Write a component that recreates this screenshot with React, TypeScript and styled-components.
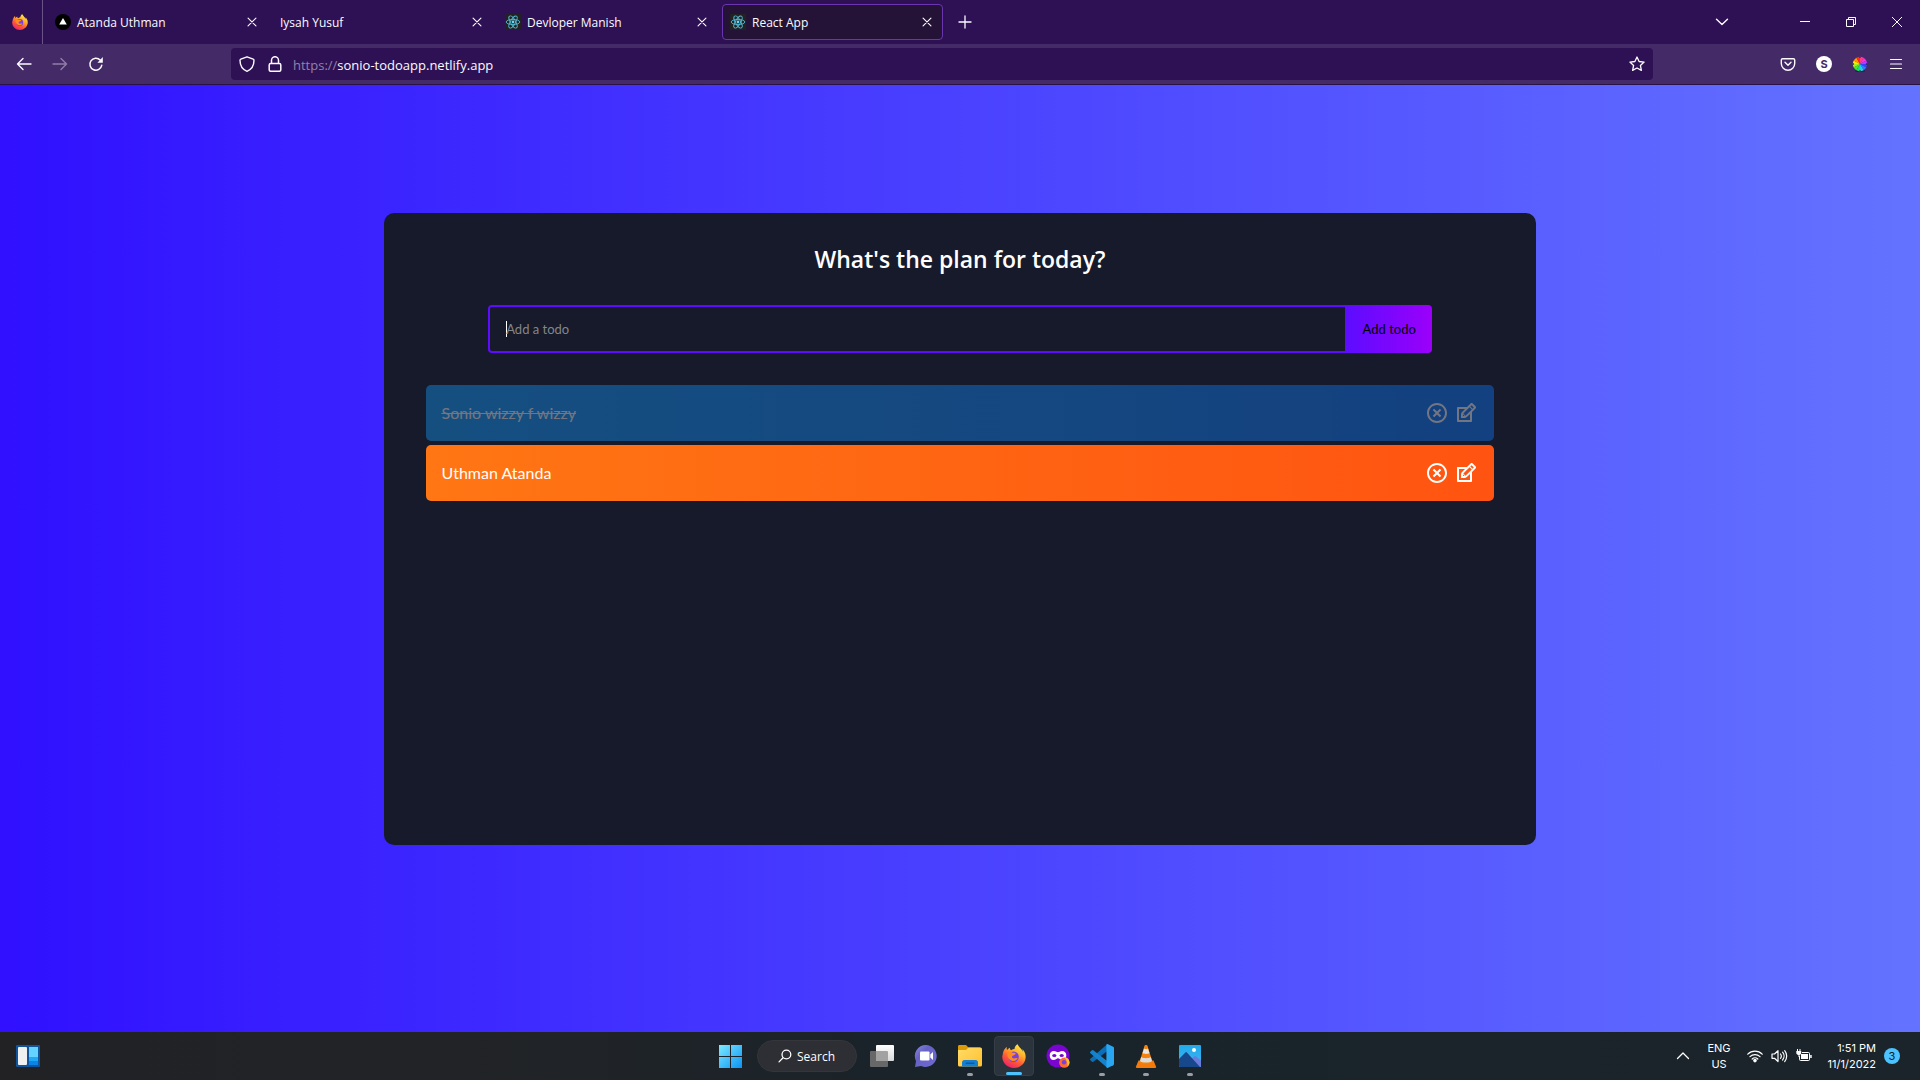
import React, { useState } from "react";
import styled, { createGlobalStyle, css } from "styled-components";
import { RiCloseCircleLine } from "react-icons/ri";
import { TiEdit } from "react-icons/ti";

const uiFont = `"Open Sans", "Noto Sans", sans-serif`;
const pageFont = `Lato, "Open Sans", sans-serif`;
const shellFont = `Inter, "Open Sans", sans-serif`;

const GlobalStyle = createGlobalStyle`
  body {
    margin: 0;
    font-family: ${uiFont};
  }
  button {
    font-family: inherit;
    color: inherit;
    border: 0;
    padding: 0;
    background: none;
    cursor: pointer;
  }
  svg {
    display: block;
  }
`;

const Screen = styled.div`
  min-height: 100vh;
  display: flex;
  flex-direction: column;
`;

/* ---------- browser chrome ---------- */

const TabStrip = styled.header`
  display: flex;
  align-items: center;
  height: 44px;
  background: #2e1155;
  color: #fbfbfe;
`;

const HomeTab = styled.button`
  box-sizing: border-box;
  width: 43px;
  height: 44px;
  padding-left: 12px;
  border-right: 1px solid #6a5387;
`;

const Tabs = styled.nav`
  display: flex;
  gap: 4px;
  margin-left: 4px;
`;

const Tab = styled.div<{ $active?: boolean }>`
  box-sizing: border-box;
  display: flex;
  align-items: center;
  gap: 6px;
  width: 221px;
  height: 36px;
  padding: 0 7px;
  border: 1px solid transparent;
  border-radius: 4px;
  ${(p) =>
    p.$active &&
    css`
      background: #251337;
      border-color: #6b35b0;
    `}
`;

const TabTitle = styled.button`
  flex: 1;
  padding-top: 2px;
  text-align: left;
  font-size: 12px;
  line-height: 20px;
`;

const TabClose = styled.button`
  display: grid;
  place-items: center;
  width: 16px;
  height: 24px;
`;

const NewTab = styled.button`
  display: grid;
  place-items: center;
  width: 32px;
  height: 32px;
  margin-left: 6px;
`;

const WindowButtons = styled.div`
  display: flex;
  margin-left: auto;
`;

const WindowButton = styled.button<{ $gap?: boolean }>`
  display: grid;
  place-items: center;
  width: 46px;
  height: 44px;
  margin-right: ${(p) => (p.$gap ? "37px" : "0")};
`;

const Toolbar = styled.div`
  box-sizing: border-box;
  display: flex;
  align-items: center;
  height: 41px;
  padding: 0 6px;
  background: #452a68;
  border-bottom: 1px solid #2a1246;
  color: #fbfbfe;
`;

const ToolButton = styled.button<{ $dim?: boolean }>`
  display: grid;
  place-items: center;
  width: 36px;
  height: 32px;
  opacity: ${(p) => (p.$dim ? 0.4 : 1)};
`;

const AddressBar = styled.div`
  box-sizing: border-box;
  flex: 1;
  display: flex;
  align-items: center;
  height: 32px;
  margin: 0 117px;
  padding: 0 8px;
  border-radius: 4px;
  background: #2e1155;
`;

const AddressIcon = styled.button`
  display: grid;
  place-items: center;
  width: 16px;
  height: 24px;
  margin-right: 12px;
  &:nth-of-type(2) {
    margin-right: 10px;
  }
  &:last-child {
    margin-right: 0;
  }
`;

const Scheme = styled.label`
  padding-top: 2px;
  font-size: 13px;
  line-height: 20px;
  color: #9282a8;
`;

const Address = styled.input`
  flex: 1;
  padding: 2px 0 0;
  border: 0;
  outline: 0;
  background: none;
  font-family: ${uiFont};
  font-size: 13px;
  line-height: 20px;
  color: #fbfbfe;
`;

const Extensions = styled.div`
  display: flex;
`;

/* ---------- todo page ---------- */

const Page = styled.main`
  flex: 1;
  display: flow-root;
  background: linear-gradient(90deg, #3010ff 0%, #6473ff 100%);
`;

const Card = styled.section`
  display: flow-root;
  width: 60%;
  min-height: 600px;
  margin: 128px auto;
  padding-bottom: 32px;
  border-radius: 10px;
  background: #161a2b;
  color: #fff;
  font-family: ${pageFont};
`;

const Heading = styled.h1`
  margin: 32px 0;
  font-family: ${uiFont};
  font-size: 23px;
  line-height: 28px;
  font-weight: 600;
  text-align: center;
`;

const TodoForm = styled.form`
  display: flex;
  justify-content: center;
  margin-bottom: 32px;
`;

const TodoInput = styled.input`
  width: 70%;
  height: 16px;
  padding: 14px 32px 14px 16px;
  border: 2px solid #5d0cff;
  border-radius: 4px 0 0 4px;
  outline: 0;
  background: transparent;
  caret-color: transparent;
  color: #fff;
  font-family: ${pageFont};
  font-size: 13px;
  &::placeholder {
    color: #848689;
    opacity: 1;
  }
  &:placeholder-shown {
    background: linear-gradient(#fff, #fff) no-repeat 16px center / 1px 16px;
  }
`;

const AddButton = styled.button`
  padding: 16px;
  border-radius: 0 4px 4px 0;
  background: linear-gradient(90deg, #5d0cff 0%, #9b00fa 100%);
  color: #000;
  font-size: 13px;
  line-height: 16px;
`;

const TodoList = styled.ul`
  margin: 0;
  padding: 0;
  list-style: none;
`;

const TodoRow = styled.li<{ $done?: boolean }>`
  display: flex;
  justify-content: space-between;
  align-items: center;
  width: 90%;
  margin: 4px auto;
  padding: 16px;
  border-radius: 5px;
  background: ${(p) =>
    p.$done
      ? "linear-gradient(90deg, #149fff 0%, #117aff 100%)"
      : "linear-gradient(90deg, #ff7614 0%, #ff5411 100%)"};
  opacity: ${(p) => (p.$done ? 0.4 : 1)};
  text-decoration: ${(p) => (p.$done ? "line-through" : "none")};
`;

const TodoText = styled.button`
  font-size: 16px;
  line-height: 24px;
  text-decoration: inherit;
`;

const RowIcons = styled.div`
  display: flex;
  gap: 5px;
`;

/* ---------- taskbar ---------- */

const Taskbar = styled.footer`
  display: grid;
  grid-template-columns: 1fr auto 1fr;
  align-items: center;
  height: 48px;
  background: linear-gradient(90deg, #222225 0%, #202327 30%, #19232b 50%, #1b242a 100%);
  color: #fff;
  font-family: ${shellFont};
`;

const Widgets = styled.button`
  justify-self: start;
  margin-left: 16px;
`;

const Apps = styled.div`
  display: flex;
  align-items: center;
  gap: 4px;
`;

const AppButton = styled.button<{ $active?: boolean; $state?: "open" | "focus" }>`
  box-sizing: border-box;
  position: relative;
  display: grid;
  place-items: center;
  width: 40px;
  height: 40px;
  border-radius: 4px;
  ${(p) =>
    p.$state === "focus" &&
    css`
      background: #2b343c;
      border: 1px solid #363e46;
    `}
  ${(p) =>
    p.$state &&
    css`
      &::after {
        content: "";
        position: absolute;
        left: 50%;
        bottom: 0;
        width: ${p.$state === "focus" ? "16px" : "6px"};
        height: 3px;
        border-radius: 2px;
        transform: translateX(-50%);
        background: ${p.$state === "focus" ? "#4cc2ff" : "#9a9da1"};
      }
    `}
`;

const SearchButton = styled.button`
  box-sizing: border-box;
  display: flex;
  align-items: center;
  justify-content: center;
  gap: 5px;
  width: 100px;
  height: 32px;
  margin: 0 1px 0 2px;
  border: 1px solid #34363c;
  border-radius: 16px;
  background: #2d2f35;
  font-family: ${uiFont};
  font-size: 12px;
`;

const Tray = styled.div`
  justify-self: end;
  display: flex;
  align-items: center;
  padding-right: 20px;
`;

const TrayButton = styled.button`
  display: flex;
  align-items: center;
  gap: 8px;
  margin-right: 16px;
  font-size: 11px;
  line-height: 16px;
`;

const Clock = styled.time`
  margin-right: 8px;
  font-size: 11px;
  line-height: 16px;
  text-align: right;
`;

const Badge = styled.span`
  width: 16px;
  height: 16px;
  border-radius: 8px;
  background: #4cc2ff;
  color: #10202c;
  font-size: 11px;
  line-height: 16px;
  text-align: center;
`;

/* ---------- drawings ---------- */

type StrokeProps = { d: string; size?: number; w?: number; box?: number };

const Stroke = ({ d, size = 16, w = 1.3, box = 16 }: StrokeProps) => (
  <svg
    width={size}
    height={size}
    viewBox={`0 0 ${box} ${box}`}
    fill="none"
    stroke="currentColor"
    strokeWidth={w}
    strokeLinecap="round"
    strokeLinejoin="round"
    aria-hidden="true"
  >
    <path d={d} />
  </svg>
);

const Firefox = ({ size = 16, id }: { size?: number; id: string }) => (
  <svg width={size} height={size} viewBox="0 0 24 24" aria-hidden="true">
    <defs>
      <linearGradient id={id} x1="0.8" y1="0" x2="0.25" y2="1">
        <stop offset="0" stopColor="#fff44f" />
        <stop offset="0.35" stopColor="#ffb02a" />
        <stop offset="0.65" stopColor="#ff5a36" />
        <stop offset="1" stopColor="#e91e70" />
      </linearGradient>
    </defs>
    <path
      fill={`url(#${id})`}
      d="M22.6 8.2c-.5-1.2-1.5-2.6-2.4-3 .6 1.200 1 2.300 1.100 3.100-1.300-3.100-3.600-4.400-5.400-7.300-.4-.600-.4-.9-.3-1-2.300 1.300-3 3.700-3.100 5-1.200.1-2.300.5-3.300 1.200-1-.400-1.300-1.600-1.300-2.500-1.200.5-2.100 1.400-2.800 2.200-.5-.6-.5-2.500-.4-2.900C3.500 3.600 1 6.800.8 10.200c-.3.800-.5 2-.5 2.600C.300 19 5.400 24 12 24c5.800 0 10.600-4.100 11.500-9.600.4-2.300 0-4.600-.9-6.200z"
    />
    <circle cx="11.600" cy="12.800" r="5.200" fill="#7542e5" />
    <path
      fill="#ff8a1e"
      d="M5.500 8.500c2-1.300 4-.9 5.100.3 1.700-.2 2.900.2 3.100.9-.4 1.300-2 1.500-3 2-.8.500-1 1.600-.200 2.300 1.400 1.200 3.200-.400 5.100.300-1 2.400-3.900 3.300-6.300 2.100-3.500-1.600-4.600-4.900-3.800-7.900z"
    />
  </svg>
);

const ReactLogo = () => (
  <svg width="16" height="16" viewBox="0 0 16 16" aria-hidden="true">
    <rect width="16" height="16" fill="#222" />
    <g fill="none" stroke="#55b9d3" strokeWidth="0.9">
      <ellipse cx="8" cy="8" rx="6.800" ry="2.600" />
      <ellipse cx="8" cy="8" rx="6.800" ry="2.600" transform="rotate(60 8 8)" />
      <ellipse cx="8" cy="8" rx="6.800" ry="2.600" transform="rotate(120 8 8)" />
    </g>
    <circle cx="8" cy="8" r="1.400" fill="#61dafb" />
  </svg>
);

const VercelLogo = () => (
  <svg width="16" height="16" viewBox="0 0 16 16" aria-hidden="true">
    <circle cx="8" cy="8" r="8" fill="#000" />
    <path d="M8 4l3.800 6.600H4.200z" fill="#fff" />
  </svg>
);

const Reload = () => (
  <svg width="16" height="16" viewBox="0 0 16 16" aria-hidden="true">
    <path
      d="M13.800 9.200A6 6 0 1 1 12.200 4"
      fill="none"
      stroke="currentColor"
      strokeWidth="1.500"
      strokeLinecap="round"
    />
    <path d="M14.800 1v5.200a.5.5 0 0 1-.5.5H9.400z" fill="currentColor" />
  </svg>
);

const Pocket = () => (
  <Stroke
    w={1.4}
    d="M2.700 2.700h10.600c.8 0 1.400.6 1.400 1.400v3.400a6.700 6.700 0 0 1-13.400 0V4.100c0-.8.600-1.400 1.400-1.400z M5 6.300l3 3 3-3"
  />
);

const Account = () => (
  <svg width="16" height="16" viewBox="0 0 16 16" aria-hidden="true">
    <circle cx="8" cy="8" r="8" fill="#fff" />
    <text
      x="8"
      y="12"
      textAnchor="middle"
      fontFamily="Inter, sans-serif"
      fontSize="11"
      fontWeight="700"
      fill="#452a68"
    >
      S
    </text>
  </svg>
);

const wheelColors = [
  "#ff3b8a", "#ff2fe0", "#b13bff", "#3d3bff", "#2f7dff", "#16d5e8",
  "#16e07a", "#38f02a", "#a8f01a", "#ffe600", "#ff9c00", "#ff2a1a",
];

const ColorWheel = () => (
  <svg width="16" height="16" viewBox="-8 -8 16 16" aria-hidden="true">
    <ellipse cy="7" rx="5" ry="1" fill="#2a1a40" />
    {wheelColors.map((c, i) => (
      <path key={c} d="M0 0L0 -7.200A7.200 7.200 0 0 1 3.600 -6.235z" fill={c} transform={`rotate(${i * 30})`} />
    ))}
    <g fill="#222">
      <circle cy="-6.600" r="0.700" />
      <circle cy="6.600" r="0.700" />
      <circle cx="-6.600" r="0.700" />
      <circle cx="6.600" r="0.700" />
    </g>
  </svg>
);

const Restore = () => (
  <svg width="10" height="10" viewBox="0 0 10 10" fill="none" stroke="currentColor" aria-hidden="true">
    <path d="M.5 2.500h7v7h-7z M2.500 2.500v-2h7v7h-2" />
  </svg>
);

const WidgetsIcon = () => (
  <svg width="24" height="22" viewBox="0 0 24 22" aria-hidden="true">
    <rect width="24" height="22" rx="1" fill="#0f549c" />
    <rect x="2" y="2" width="9" height="18" rx="1" fill="#f1f1f1" />
    <rect x="13" y="2" width="9" height="10" fill="#63d3ff" />
    <rect x="13" y="12" width="9" height="4" fill="#22a7f5" />
    <rect x="13" y="16" width="9" height="4" fill="#0a85e6" />
  </svg>
);

const StartIcon = () => (
  <svg width="23" height="23" viewBox="0 0 23 23" aria-hidden="true">
    <defs>
      <linearGradient id="start" x1="0" y1="0" x2="1" y2="1">
        <stop offset="0" stopColor="#7eeaff" />
        <stop offset="1" stopColor="#0a93f5" />
      </linearGradient>
    </defs>
    <path d="M0 0h11v11H0zM12 0h11v11H12zM0 12h11v11H0zM12 12h11v11H12z" fill="url(#start)" />
  </svg>
);

const SearchIcon = () => (
  <Stroke size={14} w={1.5} d="M14.600 6.300a5 5 0 1 1-10 0 5 5 0 0 1 10 0zM5.800 10L1.200 14.700" />
);

const TaskViewIcon = () => (
  <svg width="24" height="22" viewBox="0 0 24 22" aria-hidden="true">
    <defs>
      <linearGradient id="tv" x1="0" y1="0" x2="0" y2="1">
        <stop offset="0" stopColor="#fff" />
        <stop offset="1" stopColor="#d8d8d8" />
      </linearGradient>
    </defs>
    <rect x="6" width="18" height="16" rx="1" fill="url(#tv)" />
    <path d="M0 7a1 1 0 0 1 1-1h5v10h12v5a1 1 0 0 1-1 1H1a1 1 0 0 1-1-1z" fill="#686868" />
    <path d="M6 6h11a1 1 0 0 1 1 1v9H6z" fill="#a2a2a2" />
  </svg>
);

const ChatIcon = () => (
  <svg width="24" height="24" viewBox="0 0 24 24" aria-hidden="true">
    <defs>
      <linearGradient id="chat" x1="0" y1="0" x2="1" y2="1">
        <stop offset="0" stopColor="#8c8ce0" />
        <stop offset="0.35" stopColor="#6763c4" />
        <stop offset="1" stopColor="#6f68d6" />
      </linearGradient>
    </defs>
    <path d="M12 1a11 11 0 1 1-4.900 21L1 23l1-6A11 11 0 0 1 12 1z" fill="url(#chat)" />
    <rect x="6" y="7.500" width="9.500" height="9" rx="1" fill="#fff" />
    <path d="M16.300 10.500L19 8v8l-2.700-2.500z" fill="#fff" />
  </svg>
);

const FolderIcon = () => (
  <svg width="24" height="22" viewBox="0 0 24 22" aria-hidden="true">
    <defs>
      <linearGradient id="folder" x1="0" y1="0" x2="1" y2="1">
        <stop offset="0" stopColor="#ffdc69" />
        <stop offset="1" stopColor="#ffc02e" />
      </linearGradient>
    </defs>
    <path d="M0 1.500C0 .7.600 0 1.400 0H8l2.500 2.500H22V8H0z" fill="#dc9a08" />
    <path d="M0 5h8l2.500-2.500h12A1.500 1.500 0 0 1 24 4v16a1.500 1.500 0 0 1-1.500 1.500h-21A1.500 1.500 0 0 1 0 20z" fill="url(#folder)" />
    <path d="M4 21.500v-4a2.500 2.500 0 0 1 2.500-2.500h11a2.500 2.500 0 0 1 2.500 2.500v4z" fill="#147fd0" />
    <rect x="7.500" y="17.500" width="9" height="1.500" rx="0.700" fill="#0a5a9e" />
  </svg>
);

const PrivateFirefox = () => (
  <svg width="24" height="24" viewBox="0 0 24 24" aria-hidden="true">
    <circle cx="12" cy="12" r="11.500" fill="#7a05d0" />
    <path
      d="M8 7c1.800 0 3 1.300 4 1.300S14.200 7 16 7c2.600 0 4.300 2 4.300 4.200 0 2.700-1.500 4.800-3.700 4.800-2.200 0-3.300-1.800-4.600-1.800S9.600 16 7.400 16c-2.200 0-3.700-2.100-3.700-4.800C3.700 9 5.400 7 8 7z"
      fill="#fff"
    />
    <ellipse cx="8.300" cy="11.600" rx="2.100" ry="1.500" fill="#7a05d0" />
    <ellipse cx="15.700" cy="11.600" rx="2.100" ry="1.500" fill="#7a05d0" />
    <circle cx="18.300" cy="18.600" r="5.200" fill="#ff6a2d" />
    <path d="M18.500 13c3.500.700 5 3 5 5.600 0 1.500-.800 3-2 4 .3-4-1-6.600-3-9.600z" fill="#ffc22e" />
    <circle cx="18" cy="18.300" r="2.200" fill="#7542e5" />
  </svg>
);

const CodeIcon = () => (
  <svg width="24" height="24" viewBox="0 0 24 24" aria-hidden="true">
    <path d="M17.500 0v6.700L3.300 17.700a1 1 0 0 1-1.300 0L.400 16.300a1 1 0 0 1 0-1.500z" fill="#0a6fb8" />
    <path d="M17.500 24v-6.700L3.300 6.300a1 1 0 0 0-1.300 0L.400 7.700a1 1 0 0 0 0 1.500z" fill="#1583cc" />
    <path d="M17.500 0l5.700 2.700a1.500 1.500 0 0 1 .8 1.300v16a1.500 1.500 0 0 1-.8 1.300L17.500 24c-.6.100-1.100-.3-1.100-.9V.900c0-.6.500-1 1.100-.9z" fill="#29a6f2" />
  </svg>
);

const ConeIcon = () => (
  <svg width="22" height="23" viewBox="0 0 22 23" aria-hidden="true">
    <path d="M3.500 15.500h15L21 21.500a1 1 0 0 1-1 1.500H2a1 1 0 0 1-1-1.500z" fill="#f47b0a" />
    <path d="M9.500.800c.2-1 2.800-1 3 0L17.500 17c-1.500 2.600-11.500 2.600-13 0z" fill="#f5820d" />
    <path d="M9.100 3.500L7.600 8c1.600 1.200 5.200 1.200 6.800 0l-1.500-4.500c-1 .8-2.800.8-3.800 0z" fill="#e7e7e7" />
    <path d="M6.200 12l-1.200 4c1.900 2.100 10.100 2.100 12 0l-1.200-4c-2.200 1.600-7.400 1.600-9.600 0z" fill="#dcdcdc" />
  </svg>
);

const PhotosIcon = () => (
  <svg width="22" height="22" viewBox="0 0 22 22" aria-hidden="true">
    <defs>
      <linearGradient id="photo" x1="0" y1="0" x2="0" y2="1">
        <stop offset="0" stopColor="#22a9ea" />
        <stop offset="1" stopColor="#3fb6f2" />
      </linearGradient>
    </defs>
    <rect width="22" height="22" rx="1" fill="url(#photo)" />
    <path d="M11 15l4.500-3.800a1 1 0 0 1 1.300 0L22 15.500V21a1 1 0 0 1-1 1h-7z" fill="#6a7bdc" />
    <path d="M0 14l6.400-6.500a1 1 0 0 1 1.500 0L21 22H1a1 1 0 0 1-1-1z" fill="#17488c" />
    <circle cx="15" cy="5" r="2" fill="#fff" />
  </svg>
);

const WifiIcon = () => (
  <svg width="16" height="16" viewBox="0 0 16 16" fill="none" stroke="currentColor" strokeWidth="1.200" strokeLinecap="round" aria-hidden="true">
    <path d="M.8 6.200a10 10 0 0 1 14.400 0M3 8.700a7 7 0 0 1 10 0M5.200 11a4 4 0 0 1 5.600 0" />
    <circle cx="8" cy="12.600" r="1.200" fill="currentColor" />
  </svg>
);

const VolumeIcon = () => (
  <svg width="17" height="16" viewBox="0 0 17 16" fill="none" stroke="currentColor" strokeWidth="1.200" strokeLinecap="round" strokeLinejoin="round" aria-hidden="true">
    <path d="M1 6v4.300h2.500L7 13.500V2.700L3.500 6zM9.500 6a3.500 3.500 0 0 1 0 4.300M11.600 4.200a6 6 0 0 1 0 7.800M13.700 2.600a8.600 8.600 0 0 1 0 11" />
  </svg>
);

const BatteryIcon = () => (
  <svg width="16" height="16" viewBox="0 0 16 16" aria-hidden="true">
    <path d="M6 4.500h6.500a1 1 0 0 1 1 1v6a1 1 0 0 1-1 1h-8a1 1 0 0 1-1-1V8" fill="none" stroke="currentColor" />
    <rect x="5" y="6" width="7" height="5" fill="currentColor" />
    <path d="M14.200 7h1.500v3h-1.500zM1 1h1v2h1.500V1h1v2h.7v2c0 1.200-.8 1.800-1.700 2v2h-1V7C1.200 6.800.3 6.200.3 5V3H1z" fill="currentColor" />
  </svg>
);

const closeMark = "M3.500 3.500l9 9M12.500 3.500l-9 9";

/* ---------- app ---------- */

const tabs = [
  { title: "Atanda Uthman", icon: <VercelLogo /> },
  { title: "Iysah Yusuf" },
  { title: "Devloper Manish", icon: <ReactLogo /> },
  { title: "React App", icon: <ReactLogo />, active: true },
];

const initialTodos = [
  { id: 1, text: "Sonio wizzy f wizzy", done: true },
  { id: 2, text: "Uthman Atanda", done: false },
];

const Browser = () => (
  <>
    <TabStrip>
      <HomeTab aria-label="Firefox View">
        <Firefox id="ff-home" />
      </HomeTab>
      <Tabs aria-label="Tabs">
        {tabs.map((t) => (
          <Tab key={t.title} $active={t.active}>
            {t.icon}
            <TabTitle>{t.title}</TabTitle>
            <TabClose aria-label={`Close ${t.title}`}>
              <Stroke size={14} w={1.3} d={closeMark} />
            </TabClose>
          </Tab>
        ))}
      </Tabs>
      <NewTab aria-label="New tab">
        <Stroke w={1.3} d="M8 2v12M2 8h12" />
      </NewTab>
      <WindowButtons>
        <WindowButton $gap aria-label="List all tabs">
          <Stroke w={1.4} d="M2.500 5.200L8 10.600l5.500-5.400" />
        </WindowButton>
        <WindowButton aria-label="Minimize">
          <Stroke size={10} box={10} w={1} d="M0 4.500h10" />
        </WindowButton>
        <WindowButton aria-label="Restore">
          <Restore />
        </WindowButton>
        <WindowButton aria-label="Close window">
          <Stroke size={10} box={10} w={1} d="M0 0l10 10M10 0L0 10" />
        </WindowButton>
      </WindowButtons>
    </TabStrip>
    <Toolbar>
      <ToolButton aria-label="Back">
        <Stroke w={1.4} d="M15 8H1.500M7 2.500L1.500 8 7 13.500" />
      </ToolButton>
      <ToolButton $dim aria-label="Forward">
        <Stroke w={1.4} d="M1 8h13.500M9 2.500L14.500 8 9 13.500" />
      </ToolButton>
      <ToolButton aria-label="Reload">
        <Reload />
      </ToolButton>
      <AddressBar>
        <AddressIcon aria-label="Tracking protection">
          <Stroke w={1.4} d="M8 .8l6.200 2.400c.5.200.8.600.8 1.100 0 5.200-2 9-7 11-5-2-7-5.800-7-11 0-.5.300-.9.800-1.100z" />
        </AddressIcon>
        <AddressIcon aria-label="Site information">
          <Stroke w={1.5} d="M3.700 7.500h8.600c.8 0 1.500.7 1.500 1.500v4.800c0 .8-.7 1.500-1.500 1.500H3.700c-.8 0-1.500-.7-1.500-1.500V9c0-.8.700-1.500 1.500-1.500zM4.500 7.300V4.200a3.500 3.500 0 0 1 7 0v3.100" />
        </AddressIcon>
        <Scheme htmlFor="address">https://</Scheme>
        <Address id="address" defaultValue="sonio-todoapp.netlify.app" />
        <AddressIcon aria-label="Bookmark this page">
          <Stroke w={1.3} d="M8 1l2.100 4.500 5 .6-3.700 3.400 1 4.900L8 12l-4.400 2.400 1-4.900L.900 6.100l5-.6z" />
        </AddressIcon>
      </AddressBar>
      <Extensions>
        <ToolButton aria-label="Save to Pocket">
          <Pocket />
        </ToolButton>
        <ToolButton aria-label="Account">
          <Account />
        </ToolButton>
        <ToolButton aria-label="Color picker">
          <ColorWheel />
        </ToolButton>
        <ToolButton aria-label="Menu">
          <Stroke w={1.2} d="M2.500 3.500h11M2.500 8h11M2.500 12.500h11" />
        </ToolButton>
      </Extensions>
    </Toolbar>
  </>
);

const TodoApp = () => {
  const [todos, setTodos] = useState(initialTodos);
  const [text, setText] = useState("");

  const add = (e: React.FormEvent) => {
    e.preventDefault();
    if (!text.trim()) return;
    setTodos([{ id: Date.now(), text, done: false }, ...todos]);
    setText("");
  };

  return (
    <Page>
      <Card>
        <Heading>What's the plan for today?</Heading>
        <TodoForm onSubmit={add}>
          <TodoInput
            aria-label="Add a todo"
            placeholder="Add a todo"
            value={text}
            onChange={(e) => setText(e.target.value)}
          />
          <AddButton type="submit">Add todo</AddButton>
        </TodoForm>
        <TodoList>
          {todos.map((t) => (
            <TodoRow key={t.id} $done={t.done}>
              <TodoText
                onClick={() =>
                  setTodos(todos.map((o) => (o.id === t.id ? { ...o, done: !o.done } : o)))
                }
              >
                {t.text}
              </TodoText>
              <RowIcons>
                <button
                  aria-label={`Remove ${t.text}`}
                  onClick={() => setTodos(todos.filter((o) => o.id !== t.id))}
                >
                  <RiCloseCircleLine size={24} />
                </button>
                <button aria-label={`Edit ${t.text}`}>
                  <TiEdit size={24} />
                </button>
              </RowIcons>
            </TodoRow>
          ))}
        </TodoList>
      </Card>
    </Page>
  );
};

const Shell = () => (
  <Taskbar>
    <Widgets aria-label="Widgets">
      <WidgetsIcon />
    </Widgets>
    <Apps>
      <AppButton aria-label="Start">
        <StartIcon />
      </AppButton>
      <SearchButton>
        <SearchIcon />
        Search
      </SearchButton>
      <AppButton aria-label="Task view">
        <TaskViewIcon />
      </AppButton>
      <AppButton aria-label="Chat">
        <ChatIcon />
      </AppButton>
      <AppButton aria-label="File Explorer" $state="open">
        <FolderIcon />
      </AppButton>
      <AppButton aria-label="Firefox" $state="focus">
        <Firefox id="ff-task" size={24} />
      </AppButton>
      <AppButton aria-label="Firefox Private Browsing">
        <PrivateFirefox />
      </AppButton>
      <AppButton aria-label="Visual Studio Code" $state="open">
        <CodeIcon />
      </AppButton>
      <AppButton aria-label="VLC media player" $state="open">
        <ConeIcon />
      </AppButton>
      <AppButton aria-label="Photos" $state="open">
        <PhotosIcon />
      </AppButton>
    </Apps>
    <Tray>
      <TrayButton aria-label="Show hidden icons">
        <Stroke w={1.3} d="M2.500 10.500L8 5l5.500 5.500" />
      </TrayButton>
      <TrayButton>
        <span>
          ENG
          <br />
          US
        </span>
      </TrayButton>
      <TrayButton aria-label="Network, volume, battery">
        <WifiIcon />
        <VolumeIcon />
        <BatteryIcon />
      </TrayButton>
      <Clock>
        1:51 PM
        <br />
        11/1/2022
      </Clock>
      <Badge>3</Badge>
    </Tray>
  </Taskbar>
);

export default function App() {
  return (
    <Screen>
      <GlobalStyle />
      <Browser />
      <TodoApp />
      <Shell />
    </Screen>
  );
}
